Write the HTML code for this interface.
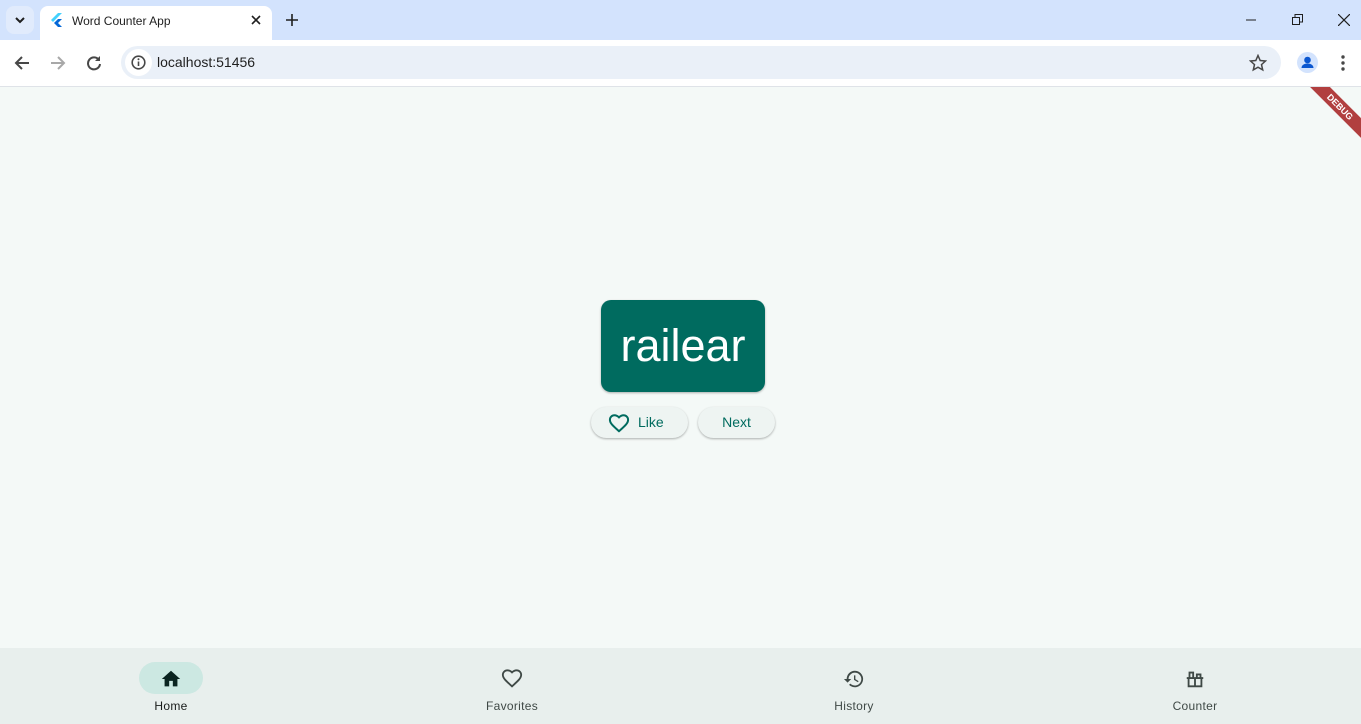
<!DOCTYPE html>
<html><head><style>
body{margin:0;width:1361px;height:724px;overflow:hidden;font-family:"Liberation Sans",sans-serif;background:#f4f9f7;position:relative}
.tabbar{position:absolute;left:0;top:0;width:1361px;height:40px;background:#d3e3fd}
.tab{position:absolute;left:40px;top:6px;width:232px;height:34px;background:#fff;border-radius:8px 8px 0 0}
.toolbar{position:absolute;left:0;top:40px;width:1361px;height:46px;background:#fff;border-bottom:1px solid #dfe3e8}
.url{position:absolute;left:121px;top:6px;width:1160px;height:33px;background:#eaf0f8;border-radius:17px}
.main{position:absolute;top:87px;left:0;width:1361px;height:561px;background:#f4f9f7;overflow:hidden}
.card{position:absolute;left:601px;top:213px;width:164px;height:92px;background:#006b5f;border-radius:10px;color:#fff;font-size:45px;text-align:center;line-height:92px;box-shadow:0 1px 2px rgba(0,0,0,.3)}
.btn{position:absolute;top:320px;height:31px;background:#eef4f2;border-radius:16px;box-shadow:0 1px 2px rgba(0,0,0,.3);color:#006b5f;font-size:14px;line-height:31px}
.nav{position:absolute;left:0;top:648px;width:1361px;height:76px;background:#e8efed}
.item{position:absolute;top:0;width:120px;text-align:center;font-size:12px;color:#3f4946;letter-spacing:.3px}
.item svg{position:absolute;top:20px;left:50%;margin-left:-11px}
.item span{position:absolute;top:51px;left:0;width:120px}
</style></head><body>
<div class="tabbar">
 <div style="position:absolute;left:6px;top:6px;width:28px;height:28px;background:#e1ebfc;border-radius:8px"></div>
 <svg style="position:absolute;left:14px;top:15px" width="12" height="10"><path d="M2 3l4 4 4-4" stroke="#1f1f1f" stroke-width="2" fill="none"/></svg>
 <div class="tab">
  <svg style="position:absolute;left:11px;top:7px" width="12" height="14"><path d="M7 0L0 7l2 2 9-9z" fill="#44d1fd"/><path d="M7 6L3 10l4 4h4L7 10l4-4z" fill="#0468d7"/></svg>
  <span style="position:absolute;left:32px;top:8px;font-size:12px;color:#1f1f1f">Word Counter App</span>
  <svg style="position:absolute;left:211px;top:9px" width="10" height="10"><path d="M1 1l8 8M9 1l-8 8" stroke="#1f1f1f" stroke-width="1.6"/></svg>
 </div>
 <svg style="position:absolute;left:286px;top:14px" width="12" height="12"><path d="M6 0v12M0 6h12" stroke="#1f1f1f" stroke-width="1.6"/></svg>
 <svg style="position:absolute;left:1246px;top:19px" width="10" height="2"><path d="M0 1h10" stroke="#1f1f1f"/></svg>
 <svg style="position:absolute;left:1292px;top:14px" width="11" height="11"><path d="M.5 3.5h7v7h-7zM3 3V.5h7.5V8H8" stroke="#1f1f1f" fill="none"/></svg>
 <svg style="position:absolute;left:1338px;top:14px" width="12" height="12"><path d="M0 0l12 12M12 0L0 12" stroke="#1f1f1f" stroke-width="1.2"/></svg>
</div>
<div class="toolbar">
 <svg style="position:absolute;left:14px;top:15px" width="16" height="16"><path d="M15 8H2M8 2L2 8l6 6" stroke="#474747" stroke-width="2" fill="none"/></svg>
 <svg style="position:absolute;left:50px;top:15px" width="16" height="16"><path d="M1 8h13M8 2l6 6-6 6" stroke="#a8a8a8" stroke-width="2" fill="none"/></svg>
 <svg style="position:absolute;left:86px;top:15px" width="16" height="16"><path d="M13 5A6 6 0 1 0 14 9" stroke="#474747" stroke-width="2" fill="none"/><path d="M14 1v5H9z" fill="#474747"/></svg>
 <div class="url">
  <div style="position:absolute;left:4px;top:3px;width:27px;height:27px;border-radius:50%;background:#fff"></div>
  <svg style="position:absolute;left:10px;top:9px" width="15" height="15"><circle cx="7.5" cy="7.5" r="6.3" stroke="#474747" stroke-width="1.6" fill="none"/><path d="M7.5 6.5v4.5" stroke="#474747" stroke-width="1.6"/><circle cx="7.5" cy="4.3" r="1" fill="#474747"/></svg>
  <span style="position:absolute;left:36px;top:8px;font-size:14px;color:#1f1f1f">localhost:51456</span>
  <svg style="position:absolute;left:1128px;top:8px" width="18" height="18"><path d="M9 1.5l2.2 5 5.3.5-4 3.6 1.2 5.3L9 13.2l-4.7 2.7 1.2-5.3-4-3.6 5.3-.5z" stroke="#474747" stroke-width="1.5" fill="none"/></svg>
 </div>
 <div style="position:absolute;left:1297px;top:12px;width:21px;height:21px;border-radius:50%;background:#d3e3fd"></div>
 <svg style="position:absolute;left:1297px;top:12px" width="21" height="21"><circle cx="10.5" cy="8" r="3.3" fill="#0b57d0"/><path d="M4.5 16c0-3 3-4.5 6-4.5s6 1.5 6 4.5z" fill="#0b57d0"/></svg>
 <svg style="position:absolute;left:1341px;top:14px" width="4" height="18"><circle cx="2" cy="3" r="1.7" fill="#474747"/><circle cx="2" cy="9" r="1.7" fill="#474747"/><circle cx="2" cy="15" r="1.7" fill="#474747"/></svg>
</div>
<div class="main">
 <div style="position:absolute;left:1288px;top:13px;width:104px;height:14px;background:#b13f3f;transform:rotate(45deg);color:#fff;font-size:9px;font-weight:bold;text-align:center;line-height:14px">DEBUG</div>
 <div class="card">railear</div>
 <div class="btn" style="left:591px;width:97px"><svg style="position:absolute;left:17px;top:6px" width="22" height="20" viewBox="0 0 24 22"><path d="M12 20l-1.5-1.3C5 13.7 2 11 2 7.5 2 4.7 4.2 2.5 7 2.5c1.8 0 3.6.9 5 2.3 1.4-1.4 3.2-2.3 5-2.3 2.8 0 5 2.2 5 5 0 3.5-3 6.2-8.5 11.2z" stroke="#006b5f" stroke-width="2.2" fill="none"/></svg><span style="position:absolute;left:47px">Like</span></div>
 <div class="btn" style="left:698px;width:77px;text-align:center">Next</div>
</div>
<div class="nav">
 <div class="item" style="left:111px;color:#191c1b"><div style="position:absolute;left:28px;top:14px;width:64px;height:32px;border-radius:16px;background:#cce8e2"></div><svg width="22" height="22" viewBox="0 0 24 24"><path d="M10 20v-6h4v6h5v-8h3L12 3 2 12h3v8z" fill="#0a2420"/></svg><span>Home</span></div>
 <div class="item" style="left:452px"><svg width="22" height="22" viewBox="0 0 24 24"><path d="M12 20l-1.4-1.3C5.4 14 2 11 2 7.5 2 4.7 4.2 2.5 7 2.5c1.8 0 3.6.9 5 2.3 1.4-1.4 3.2-2.3 5-2.3 2.8 0 5 2.2 5 5 0 3.5-3.4 6.5-8.6 11.2z" stroke="#3f4946" stroke-width="2" fill="none"/></svg><span>Favorites</span></div>
 <div class="item" style="left:794px"><svg width="22" height="22" viewBox="0 0 24 24"><path d="M13 3a9 9 0 0 0-9 9H1l4 4 4-4H6a7 7 0 1 1 2 5l-1.4 1.4A9 9 0 1 0 13 3zm-1 5v5l4.3 2.5.7-1.2-3.5-2.1V8z" fill="#3f4946"/></svg><span>History</span></div>
 <div class="item" style="left:1135px"><svg width="22" height="22" viewBox="0 0 24 24"><path d="M3 11h18M5 11v9h14v-9M12 11v9M5 20h14M6 11V5h4v6M14 11V7h4v4" stroke="#3f4946" stroke-width="2" fill="none"/></svg><span>Counter</span></div>
</div>
</body></html>
